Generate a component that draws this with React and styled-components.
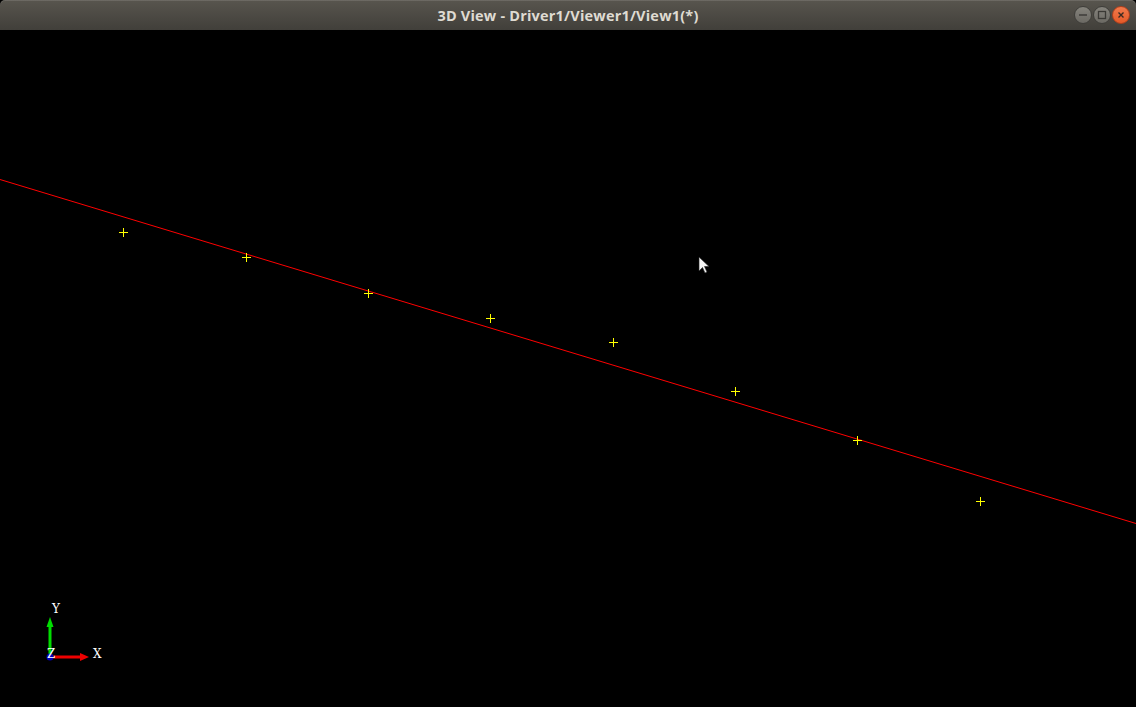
import React from 'react'
import styled, {createGlobalStyle} from 'styled-components'

const GlobalStyle = createGlobalStyle`
html, body, #root{
    margin: 0;
    padding: 0;
    width: 100%;
    height: 100%;
    background: #000;
    overflow: hidden;
}
`

const markers = [
    [123, 232], [246, 257], [368, 293], [490, 318],
    [613, 342], [735, 391], [857, 440], [980, 501],
]

const Window = () => {
    return (
        <Frame>
            <GlobalStyle />
            <TitleBar>
                <Title>3D View - Driver1/Viewer1/View1(*)</Title>
                <Controls>
                    <WinButton>
                        <svg width="10" height="10" viewBox="0 0 10 10">
                            <line x1="1" y1="5" x2="9" y2="5" stroke="#3a3935" strokeWidth="1.4" />
                        </svg>
                    </WinButton>
                    <WinButton>
                        <svg width="10" height="10" viewBox="0 0 10 10">
                            <rect x="1.5" y="1.5" width="7" height="7" fill="none" stroke="#3a3935" strokeWidth="1.3" />
                        </svg>
                    </WinButton>
                    <WinButton close>
                        <svg width="10" height="10" viewBox="0 0 10 10">
                            <path d="M2.5 2.5 L7.5 7.5 M7.5 2.5 L2.5 7.5" stroke="#3a2a22" strokeWidth="1.4" />
                        </svg>
                    </WinButton>
                </Controls>
            </TitleBar>
            <Viewport>
                <Scene viewBox="0 30 1136 677" preserveAspectRatio="none">
                    <line x1="0" y1="179.5" x2="1136" y2="523.5" stroke="#ff0000" strokeWidth="1" />
                    {markers.map(([x, y]) => (
                        <path key={x} d={`M${x - 4} ${y + 0.5} H${x + 5} M${x + 0.5} ${y - 4} V${y + 5}`}
                            stroke="#ffff00" strokeWidth="1" shapeRendering="crispEdges" />
                    ))}
                    <g>
                        <line x1="50" y1="656" x2="50" y2="625" stroke="#00dd00" strokeWidth="3" />
                        <polygon points="50,617 46.5,627 53.5,627" fill="#00dd00" />
                        <line x1="50" y1="657" x2="81" y2="657" stroke="#ee0000" strokeWidth="3" />
                        <polygon points="89,657 80,653 80,661" fill="#ee0000" />
                        <circle cx="50" cy="657" r="3.5" fill="#0000bb" />
                        <AxisLabel x="52" y="613">Y</AxisLabel>
                        <AxisLabel x="93" y="658">X</AxisLabel>
                        <AxisLabel x="47" y="658">Z</AxisLabel>
                    </g>
                    <path d="M699 257 V271 L702.5 267.5 L705 273 L707 272 L704.5 266.5 L709 266.5 Z"
                        fill="#f4f4f4" stroke="#222" strokeWidth="0.6" />
                </Scene>
            </Viewport>
        </Frame>
    )
}

const Frame = styled.div`
display: flex;
flex-direction: column;
width: 1136px;
height: 707px;
background: #000;
`

const TitleBar = styled.div`
height: 30px;
flex: none;
display: flex;
align-items: center;
justify-content: center;
position: relative;
background: linear-gradient(#58554e, #413f3a);
border-radius: 5px 5px 0 0;
box-shadow: inset 0 1px 0 rgba(255,255,255,0.12);
`

const Title = styled.div`
font-family: "Open Sans", "DejaVu Sans", sans-serif;
font-weight: 700;
font-size: 14.5px;
color: #dfdbd2;
letter-spacing: 0.2px;
`

const Controls = styled.div`
position: absolute;
right: 6px;
top: 6px;
display: flex;
gap: 1px;
`

const WinButton = styled.div`
width: 18px;
height: 18px;
border-radius: 50%;
display: flex;
align-items: center;
justify-content: center;
box-sizing: border-box;
border: 1px solid ${p => p.close ? '#b2401c' : '#3f3e3a'};
background: ${p => p.close
    ? 'linear-gradient(#f27a4c, #e45a28)'
    : 'linear-gradient(#85837c, #6b6963)'};
`

const Viewport = styled.div`
flex: 1;
display: flex;
background: #000;
`

const Scene = styled.svg`
width: 100%;
height: 100%;
display: block;
`

const AxisLabel = styled.text`
font-family: "DejaVu Serif", "Liberation Serif", serif;
font-size: 12px;
fill: #ffffff;
`

export default Window
